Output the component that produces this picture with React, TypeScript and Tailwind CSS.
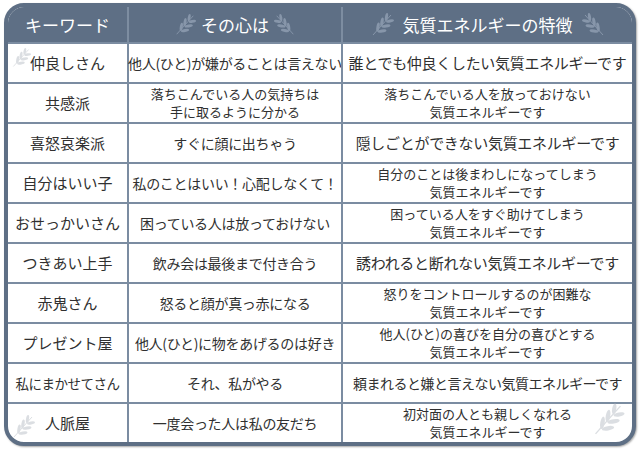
import React from 'react';

type Row = {
  key: string;
  keySize?: string;
  heart: string[];
  trait: string[];
  traitSize?: string;
};

const rows: Row[] = [
  { key: '仲良しさん', heart: ['他人(ひと)が嫌がることは言えない'], trait: ['誰とでも仲良くしたい気質エネルギーです'] },
  { key: '共感派', heart: ['落ちこんでいる人の気持ちは', '手に取るように分かる'], trait: ['落ちこんでいる人を放っておけない', '気質エネルギーです'] },
  { key: '喜怒哀楽派', heart: ['すぐに顔に出ちゃう'], trait: ['隠しごとができない気質エネルギーです'] },
  { key: '自分はいい子', heart: ['私のことはいい！心配しなくて！'], trait: ['自分のことは後まわしになってしまう', '気質エネルギーです'] },
  { key: 'おせっかいさん', heart: ['困っている人は放っておけない'], trait: ['困っている人をすぐ助けてしまう', '気質エネルギーです'] },
  { key: 'つきあい上手', heart: ['飲み会は最後まで付き合う'], trait: ['誘われると断れない気質エネルギーです'] },
  { key: '赤鬼さん', heart: ['怒ると顔が真っ赤になる'], trait: ['怒りをコントロールするのが困難な', '気質エネルギーです'] },
  { key: 'プレゼント屋', heart: ['他人(ひと)に物をあげるのは好き'], trait: ['他人(ひと)の喜びを自分の喜びとする', '気質エネルギーです'] },
  {
    key: '私にまかせてさん',
    keySize: 'text-[13.5px] tracking-[-0.5px]',
    heart: ['それ、私がやる'],
    trait: ['頼まれると嫌と言えない気質エネルギーです'],
    traitSize: 'text-[14px] tracking-[-0.5px]',
  },
  { key: '人脈屋', heart: ['一度会った人は私の友だち'], trait: ['初対面の人とも親しくなれる', '気質エネルギーです'] },
];

function Sprig({ className, color, flip }: { className: string; color: string; flip?: boolean }) {
  return (
    <svg viewBox="0 0 26 26" className={className} style={flip ? { transform: 'scaleX(-1)' } : undefined}>
      <path d="M4 23 Q12 14 22 3" stroke={color} strokeWidth="1" fill="none" />
      <ellipse cx="9" cy="15" rx="4.5" ry="1.6" fill={color} transform="rotate(-80 9 15)" />
      <ellipse cx="13" cy="19" rx="4.5" ry="1.6" fill={color} transform="rotate(-10 13 19)" />
      <ellipse cx="13" cy="10" rx="4.5" ry="1.6" fill={color} transform="rotate(-80 13 10)" />
      <ellipse cx="17" cy="14" rx="4.5" ry="1.6" fill={color} transform="rotate(-10 17 14)" />
      <ellipse cx="17.5" cy="5" rx="4" ry="1.5" fill={color} transform="rotate(-80 17.5 5)" />
      <ellipse cx="21" cy="9" rx="4" ry="1.5" fill={color} transform="rotate(-10 21 9)" />
    </svg>
  );
}

function Cell({ lines, single, multi, divider }: { lines: string[]; single: string; multi: string; divider?: boolean }) {
  return (
    <div
      className={`flex flex-col items-center justify-center whitespace-nowrap text-center text-[#303030] ${
        divider ? 'border-l-2 border-[#7b8ca1]' : ''
      } ${lines.length > 1 ? multi + ' leading-[18px]' : single + ' leading-[20px]'}`}
    >
      {lines.map((l) => (
        <span key={l}>{l}</span>
      ))}
    </div>
  );
}

export default function App() {
  return (
    <div className="w-[640px] h-[450px] bg-white pt-[3px] pl-[4px]" style={{ fontFamily: '"Noto Sans CJK JP", "Noto Sans", sans-serif' }}>
      <div className="relative w-[632px] h-[443px] rounded-[20px] border-4 border-[#5e6f85] bg-white overflow-hidden shadow-[1px_1px_2px_rgba(0,0,0,0.35)]">
        <div className="grid grid-cols-[119px_214px_1fr] h-[35px] bg-[#5e6f85] text-white text-[17px]">
          <div className="flex items-center justify-center">キーワード</div>
          <div className="flex items-center justify-center gap-1 border-l-2 border-[#7d8da1]">
            <Sprig className="w-[24px] h-[24px]" color="#8796aa" />
            <span>その心は</span>
            <Sprig className="w-[24px] h-[24px]" color="#8796aa" flip />
          </div>
          <div className="flex items-center justify-center gap-2 border-l-2 border-[#7d8da1]">
            <Sprig className="w-[26px] h-[26px]" color="#8796aa" />
            <span>気質エネルギーの特徴</span>
            <Sprig className="w-[26px] h-[26px]" color="#8796aa" flip />
          </div>
        </div>

        {rows.map((r) => (
          <div key={r.key} className="grid grid-cols-[119px_214px_1fr] h-[40px] border-t-2 border-[#7b8ca1]">
            <Cell lines={[r.key]} single={r.keySize ?? 'text-[15px]'} multi="text-[15px]" />
            <Cell lines={r.heart} single="text-[14px] tracking-[-0.3px]" multi="text-[13px]" divider />
            <Cell lines={r.trait} single={r.traitSize ?? 'text-[15px] tracking-[-0.3px]'} multi="text-[13px]" divider />
          </div>
        ))}

        <Sprig className="absolute left-[2px] top-[38px] w-[22px] h-[26px] opacity-60" color="#c4c9cf" />
        <Sprig className="absolute left-[2px] bottom-[2px] w-[26px] h-[26px] opacity-60" color="#c4c9cf" />
        <Sprig className="absolute right-[4px] bottom-[4px] w-[40px] h-[36px] opacity-60" color="#c4c9cf" />
      </div>
    </div>
  );
}
